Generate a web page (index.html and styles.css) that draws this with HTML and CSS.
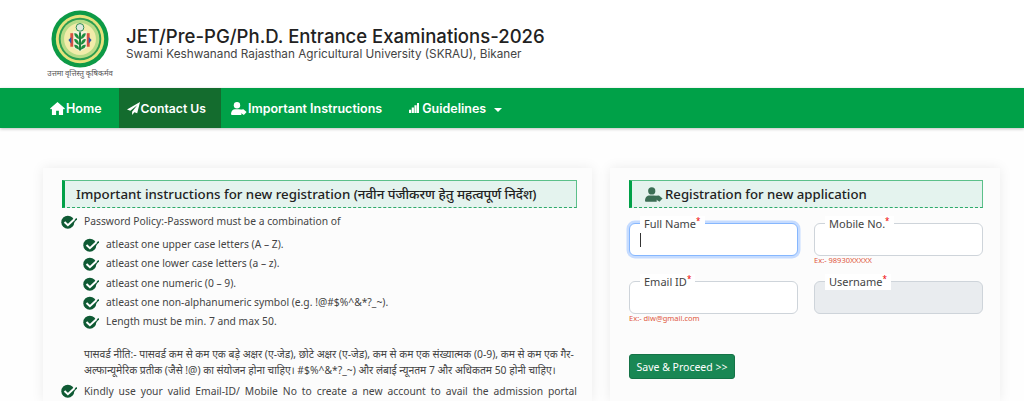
FILE: index.html
```html
<!DOCTYPE html>
<html lang="en">
<head>
<meta charset="utf-8">
<title>JET/Pre-PG/Ph.D. Entrance Examinations-2026</title>
<link rel="stylesheet" href="styles.css">
</head>
<body>
<svg class="defs" width="0" height="0" aria-hidden="true">
  <symbol id="tick" viewBox="0 0 16 14">
    <circle cx="6.800" cy="7.200" r="6.500" fill="#0f5a34"/>
    <path d="M7.800 11.800 15.800 3.600" fill="none" stroke="#0f5a34" stroke-width="1.400"/>
    <path d="M3.500 7 6.900 10.200 13.300 4.200" fill="none" stroke="#fff" stroke-width="2"/>
  </symbol>
  <symbol id="usertag" viewBox="0 0 20 16">
    <circle cx="7.500" cy="4" r="4"/>
    <path d="M0 15c0-4 2.500-6 5-6h5c1.200 0 2.200.4 3 1v6H1c-.6 0-1-.4-1-1z"/>
    <path d="M11.500 9.500l4-.5 4 3.500-3.500 3.500-4.500-3z"/>
  </symbol>
</svg>

<header class="brand">
  <div class="logo-wrap">
    <svg class="logo" viewBox="0 0 60 60" role="img" aria-label="SKRAU logo">
      <circle cx="30" cy="30" r="29.500" fill="#0d9a46"/>
      <circle cx="30" cy="30" r="25" fill="#e6e27c"/>
      <circle cx="30" cy="30" r="22" fill="#2e9e50"/>
      <circle cx="30" cy="30" r="20" fill="#b6db86"/>
      <circle cx="30" cy="30" r="16.500" fill="#f2ecaa"/>
      <path d="M20 24h20v14H20z" fill="#d8503f"/>
      <path d="M23 22h14v17l-7 4-7-4z" fill="#f4f2dc"/>
      <circle cx="30" cy="18" r="4" fill="#dfeadf" stroke="#2a8a50"/>
      <path d="M29 23h2v19h-2z" fill="#167c39"/>
      <path d="M29 30c-3-1-5-3-5-6 3 0 5 2 5 6zm2 0c3-1 5-3 5-6-3 0-5 2-5 6zm-2 6c-3-1-5-3-5-6 3 0 5 2 5 6zm2 0c3-1 5-3 5-6-3 0-5 2-5 6zm-2 5c-3-1-5-2-5-5 3 0 5 1 5 5zm2 0c3-1 5-2 5-5-3 0-5 1-5 5z" fill="#1c8f3f"/>
      <path d="M18 31l3-3v7zM42 31l-3-3v7z" fill="#2858a8"/>
    </svg>
    <span class="motto">उत्तमा वृत्तिस्तु कृषिकर्मव</span>
  </div>
  <div class="brand-text">
    <h1>JET/Pre-PG/Ph.D. Entrance Examinations-2026</h1>
    <p>Swami Keshwanand Rajasthan Agricultural University (SKRAU), Bikaner</p>
  </div>
</header>

<nav class="nav">
  <a class="nav-item" href="#">
    <svg class="ni ni-home" viewBox="0 0 16 14"><path d="M8 0 0 7l1 1.200 1-.8V14h4.500V9.500h3V14H14V7.400l1 .8L16 7z"/></svg>Home</a>
  <a class="nav-item active" href="#">
    <svg class="ni ni-plane" viewBox="0 0 14 14"><path d="M14 0 0 8l3.600 1.500L11 3.500 5.500 10.500V14l2.500-3 3 1.200z"/></svg>Contact Us</a>
  <a class="nav-item" href="#">
    <svg class="ni ni-user"><use href="#usertag"/></svg>Important Instructions</a>
  <a class="nav-item" href="#">
    <svg class="ni ni-bars" viewBox="0 0 11 11"><path d="M0 7.500h2.400V11H0zM3 5h2.400v6H3zM6 2.500h2.400V11H6zM8.800 0h2.200v11H8.800z"/></svg>Guidelines<span class="caret"></span></a>
</nav>

<main class="content">
  <section class="card card-left">
    <h2 class="sec-title sec-left">Important instructions for new registration (नवीन पंजीकरण हेतु महत्वपूर्ण निर्देश)</h2>
    <ul class="rules">
      <li class="rule"><svg class="tick"><use href="#tick"/></svg><span>Password Policy:-Password must be a combination of</span></li>
    </ul>
    <ul class="rules sub">
      <li class="rule"><svg class="tick"><use href="#tick"/></svg><span>atleast one upper case letters (A – Z).</span></li>
      <li class="rule"><svg class="tick"><use href="#tick"/></svg><span>atleast one lower case letters (a – z).</span></li>
      <li class="rule"><svg class="tick"><use href="#tick"/></svg><span>atleast one numeric (0 – 9).</span></li>
      <li class="rule"><svg class="tick"><use href="#tick"/></svg><span>atleast one non-alphanumeric symbol (e.g. !@#$%^&amp;*?_~).</span></li>
      <li class="rule"><svg class="tick"><use href="#tick"/></svg><span>Length must be min. 7 and max 50.</span></li>
    </ul>
    <p class="hindi">पासवर्ड नीति:- पासवर्ड कम से कम एक बड़े अक्षर (ए-जेड), छोटे अक्षर (ए-जेड), कम से कम एक संख्यात्मक (0-9), कम से कम एक गैर-अल्फान्यूमेरिक प्रतीक (जैसे !@) का संयोजन होना चाहिए। #$%^&amp;*?_~) और लंबाई न्यूनतम 7 और अधिकतम 50 होनी चाहिए।</p>
    <ul class="rules">
      <li class="rule"><svg class="tick"><use href="#tick"/></svg><span class="just">Kindly use your valid Email-ID/ Mobile No to create a new account to avail the admission portal services.</span></li>
    </ul>
  </section>

  <section class="card card-right">
    <h2 class="sec-title reg"><svg class="reg-icon"><use href="#usertag"/></svg>Registration for new application</h2>
    <form class="form-grid">
      <div class="field">
        <label class="flabel">Full Name<sup>*</sup></label>
        <div class="input focus"><span class="cursor"></span></div>
      </div>
      <div class="field">
        <label class="flabel">Mobile No.<sup>*</sup></label>
        <div class="input"></div>
        <small class="hint">Ex:- 98930XXXXX</small>
      </div>
      <div class="field">
        <label class="flabel">Email ID<sup>*</sup></label>
        <div class="input"></div>
        <small class="hint">Ex:- diw@gmail.com</small>
      </div>
      <div class="field">
        <label class="flabel">Username<sup>*</sup></label>
        <div class="input disabled"></div>
      </div>
    </form>
    <button class="save" type="button">Save &amp; Proceed &gt;&gt;</button>
  </section>
</main>
</body>
</html>
```

FILE: styles.css
```css
* { box-sizing: border-box; }
html, body { margin: 0; height: 401px; overflow: hidden; }
body {
  background: #fefefe;
  font-family: "Noto Sans", "Noto Sans Devanagari", sans-serif;
  color: #333;
}
.defs { position: absolute; }

.brand {
  height: 88px;
  display: flex;
  align-items: flex-start;
  padding: 10px 0 0 44px;
  background: #fff;
}
.logo-wrap { width: 72px; display: flex; flex-direction: column; align-items: center; }
.logo { width: 58px; height: 58px; display: block; }
.motto { font-family: "Noto Sans CJK SC", "Noto Sans", serif; font-size: 7.700px; color: #555; line-height: 10px; white-space: nowrap; }
.brand-text { margin: 15px 0 0 10px; }
.brand-text h1 {
  margin: 0;
  font-family: Inter, sans-serif;
  font-weight: 500;
  font-size: 18.550px;
  line-height: 22px;
  color: #222;
}
.brand-text p {
  margin: 0;
  font-family: Inter, sans-serif;
  font-size: 11.750px;
  line-height: 14px;
  color: #444;
}

.nav {
  height: 40px;
  background: #00a148;
  display: flex;
  padding-left: 40px;
  box-shadow: 0 1px 3px rgba(0,0,0,.25);
  position: relative;
}
.nav-item {
  display: flex;
  align-items: center;
  padding: 0 10px;
  color: #fff;
  text-decoration: none;
  font-family: Inter, sans-serif;
  font-weight: 600;
  font-size: 12.500px;
}
.nav-item.active { background: #146c2e; margin-left: 7px; padding: 0 15px 0 8px; font-size: 12.200px; }
.nav-item:nth-child(4) { padding-left: 17px; }
.ni { fill: #fff; margin-right: 1px; }
.ni-home { width: 15px; height: 13px; }
.ni-plane { width: 13px; height: 13px; }
.ni-user { width: 16px; height: 13px; }
.ni-bars { width: 10px; height: 10px; margin-right: 3px; }
.caret { margin-left: 8px; margin-top: 3px; border: 4px solid transparent; border-top-color: #fff; border-bottom: 0; }

.content {
  display: flex;
  gap: 18px;
  padding: 40px 24px 0 43px;
  align-items: flex-start;
}
.card {
  background: #fcfcfc;
  box-shadow: 0 0 12px rgba(0,0,0,.08);
  padding: 12px 19px 0;
  height: 233px;
  overflow: hidden;
}
.card-left { width: 549px; flex: none; padding-right: 15px; }
.card-right { width: 390px; flex: none; padding-right: 17px; }

.sec-title {
  margin: 0;
  height: 28px;
  display: flex;
  align-items: center;
  background: #e4f3ee;
  border: 1px solid #5cc08a;
  border-bottom: 1px dashed #2eaa6a;
  border-left: 3px solid #00a148;
  padding-left: 11px;
  font-size: 13.200px;
  font-weight: 500;
  color: #222;
  white-space: nowrap;
}
.sec-left { font-size: 13.300px; }
.reg { padding-left: 13px; }
.reg-icon { width: 18px; height: 15px; fill: #3b6e55; margin-right: 2px; }

.rules { list-style: none; margin: 0; padding: 0; }
.rule { display: flex; font-size: 10.300px; line-height: 16px; color: #444; }
.rule span { flex: 1; }
.tick { width: 16px; height: 14px; flex: none; margin-right: 7px; margin-top: 2px; }
.card-left > .rules:first-of-type { margin-top: 5px; margin-left: -1px; }
.sub { margin: 7px 0 0 21px; }
.sub .rule { height: 19.300px; }
.hindi { margin: 14px 0 0 22px; font-size: 10.350px; line-height: 16px; color: #444; }
.just { text-align: justify; }
.hindi + .rules { margin: 4px 0 0 -1px; }
.hindi + .rules .rule { line-height: 18px; }

.form-grid {
  display: grid;
  grid-template-columns: 169px 169px;
  column-gap: 16px;
  margin-top: 15px;
}
.field { position: relative; height: 58px; }
.input {
  height: 33px;
  background: #fff;
  border: 1px solid #ced4da;
  border-radius: 6px;
  display: flex;
  align-items: center;
  padding-left: 10px;
}
.input.focus { border-color: #86b7fe; box-shadow: 0 0 0 2.500px #c6dcff; }
.input.disabled { background: #e9ecef; }
.cursor { width: 1px; height: 14px; background: #333; }
.flabel {
  position: absolute;
  top: -7px;
  left: 11px;
  padding: 0 4px;
  background: #fff;
  font-size: 11px;
  line-height: 16px;
  height: 16px;
  color: #444;
}
.flabel sup { color: #e00; font-size: 8px; line-height: 0; vertical-align: 4px; }
.hint { display: block; font-size: 7.500px; line-height: 11px; color: #e0583c; margin-top: -1px; }

.save {
  display: block;
  margin-top: 15px;
  width: 106px;
  height: 25px;
  background: #198754;
  border: 1px solid #157347;
  border-radius: 3px;
  color: #fff;
  font: 10.500px "Noto Sans", sans-serif;
  padding: 0;
}
```
